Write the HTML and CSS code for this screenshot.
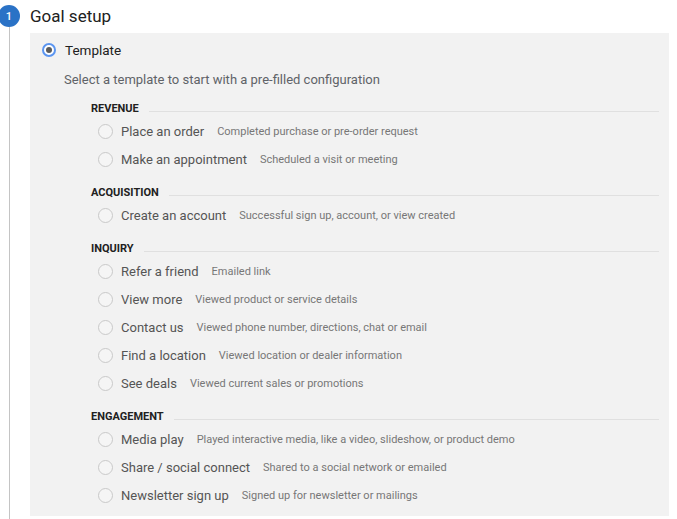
FILE: index.html
```html
<!DOCTYPE html>
<html>
<head>
<meta charset="utf-8">
<link rel="stylesheet" href="styles.css">
</head>
<body>
<div class="step">
  <div class="rail">
    <div class="badge">1</div>
    <div class="line"></div>
  </div>
  <div class="main">
    <h1 class="title">Goal setup</h1>
    <div class="panel">
      <div class="choice">
        <span class="radio radio-on"></span>
        <span class="choice-label">Template</span>
      </div>
      <p class="hint">Select a template to start with a pre-filled configuration</p>

      <div class="group">
        <div class="group-head"><span class="group-name">REVENUE</span><span class="rule"></span></div>
        <div class="item"><span class="radio"></span><span class="item-label">Place an order</span><span class="item-desc">Completed purchase or pre-order request</span></div>
        <div class="item"><span class="radio"></span><span class="item-label">Make an appointment</span><span class="item-desc">Scheduled a visit or meeting</span></div>
      </div>

      <div class="group">
        <div class="group-head"><span class="group-name">ACQUISITION</span><span class="rule"></span></div>
        <div class="item"><span class="radio"></span><span class="item-label">Create an account</span><span class="item-desc">Successful sign up, account, or view created</span></div>
      </div>

      <div class="group">
        <div class="group-head"><span class="group-name">INQUIRY</span><span class="rule"></span></div>
        <div class="item"><span class="radio"></span><span class="item-label">Refer a friend</span><span class="item-desc">Emailed link</span></div>
        <div class="item"><span class="radio"></span><span class="item-label">View more</span><span class="item-desc">Viewed product or service details</span></div>
        <div class="item"><span class="radio"></span><span class="item-label">Contact us</span><span class="item-desc">Viewed phone number, directions, chat or email</span></div>
        <div class="item"><span class="radio"></span><span class="item-label">Find a location</span><span class="item-desc">Viewed location or dealer information</span></div>
        <div class="item"><span class="radio"></span><span class="item-label">See deals</span><span class="item-desc">Viewed current sales or promotions</span></div>
      </div>

      <div class="group">
        <div class="group-head"><span class="group-name">ENGAGEMENT</span><span class="rule"></span></div>
        <div class="item"><span class="radio"></span><span class="item-label">Media play</span><span class="item-desc">Played interactive media, like a video, slideshow, or product demo</span></div>
        <div class="item"><span class="radio"></span><span class="item-label">Share / social connect</span><span class="item-desc">Shared to a social network or emailed</span></div>
        <div class="item"><span class="radio"></span><span class="item-label">Newsletter sign up</span><span class="item-desc">Signed up for newsletter or mailings</span></div>
      </div>
    </div>
  </div>
</div>
</body>
</html>
```

FILE: styles.css
```css
* { box-sizing: border-box; }
html, body { margin: 0; padding: 0; background: #fff; }
body {
  font-family: Roboto, "Liberation Sans", Arial, sans-serif;
  color: #212121;
  height: 519px;
  overflow: hidden;
}
.step {
  display: flex;
  gap: 10px;
  min-height: 519px;
}
.rail {
  width: 20px;
  display: flex;
  flex-direction: column;
  align-items: center;
  padding-top: 5px;
}
.badge {
  width: 22px;
  height: 22px;
  flex: none;
  border-radius: 50%;
  background: #2a72c6;
  color: #fff;
  font-size: 11px;
  font-weight: 500;
  display: flex;
  align-items: center;
  justify-content: center;
  margin-left: -2px;
}
.line {
  flex: 1;
  width: 1px;
  background: #c4c4c4;
  margin-left: -1px;
}
.main {
  width: 639px;
}
.title {
  margin: 0;
  padding-top: 4px;
  height: 33px;
  font-size: 17px;
  font-weight: 400;
  line-height: 24px;
  color: #212121;
}
.panel {
  background: #f2f2f2;
  padding: 4px 10px 7px 12px;
}
.choice {
  height: 26px;
  display: flex;
  align-items: center;
  gap: 9px;
}
.choice-label {
  font-size: 13.5px;
  color: #212121;
}
.radio {
  width: 15px;
  height: 15px;
  flex: none;
  border-radius: 50%;
  border: 1px solid #c9c9c9;
  background: #f5f5f5;
}
.radio-on {
  width: 14px;
  height: 14px;
  border: 2px solid #5b95f0;
  background: #fff;
  display: flex;
  align-items: center;
  justify-content: center;
}
.radio-on::after {
  content: "";
  width: 6px;
  height: 6px;
  border-radius: 50%;
  background: #5a5a5a;
}
.hint {
  margin: 7px 0 0 22px;
  font-size: 13px;
  line-height: 20px;
  color: #5f6368;
}
.group {
  margin-left: 49px;
  margin-top: 11px;
}
.hint + .group { margin-top: 10px; }
.group-head {
  height: 17px;
  display: flex;
  align-items: center;
  gap: 10px;
}
.group-name {
  font-size: 11px;
  font-weight: 700;
  color: #212121;
  line-height: 17px;
}
.rule {
  flex: 1;
  height: 1px;
  background: #e0e0e0;
  margin-top: 5px;
}
.item {
  height: 28px;
  display: flex;
  align-items: center;
  padding-left: 7px;
}
.item-label {
  font-size: 13px;
  color: #555;
  margin-left: 8px;
}
.item-desc {
  font-size: 11px;
  color: #777;
  margin-left: 13px;
}
```
